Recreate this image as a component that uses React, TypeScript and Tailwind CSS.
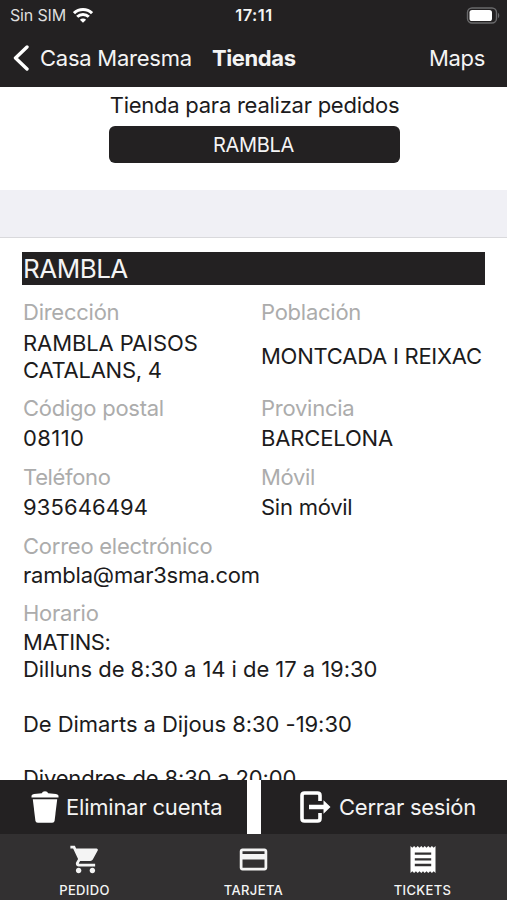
import type { ReactNode } from 'react';
import { MdCreditCard, MdShoppingCart } from 'react-icons/md';

interface FieldProps {
  label: string;
  labelClass?: string;
  className?: string;
  children: ReactNode;
}

const SCHEDULE = [
  { text: 'MATINS:', className: 'tracking-[-0.4px]' },
  { text: 'Dilluns de 8:30 a 14 i de 17 a 19:30', className: 'tracking-[-0.05px]' },
  { text: '', className: '' },
  { text: 'De Dimarts a Dijous 8:30 -19:30', className: 'tracking-[-0.05px]' },
  { text: '', className: '' },
  { text: 'Divendres de 8:30 a 20:00', className: 'tracking-[-0.15px]' },
];

const TABS = [
  { name: 'PEDIDO', icon: <MdShoppingCart className="ml-px size-[33px]" /> },
  { name: 'TARJETA', icon: <MdCreditCard className="mr-px size-[33px]" /> },
  { name: 'TICKETS', icon: <ReceiptIcon /> },
];

function Field({ label, labelClass = 'tracking-[-0.25px]', className = '', children }: FieldProps) {
  return (
    <div className={`flex flex-col whitespace-nowrap ${className}`}>
      <span className={`h-[27px] text-[#acacac] ${labelClass}`}>{label}</span>
      <div className="flex flex-1 flex-col justify-center pt-[3px]">{children}</div>
    </div>
  );
}

function StatusBar() {
  return (
    <div className="grid h-[30px] grid-cols-3 items-center pl-[10px] pr-[7px] text-[16px]">
      <div className="flex items-center gap-[7px] text-[#dedede]">
        <span className="tracking-[-0.15px]">Sin SIM</span>
        <svg width="20" height="15" viewBox="0 0 20 15" fill="none" stroke="white" strokeWidth="3">
          <path d="M1 5.2a12.8 12.8 0 0 1 18 0" />
          <path d="M4.2 8.8a8.3 8.3 0 0 1 11.6 0" />
          <path d="M10 14.8 6.9 11.7a4.4 4.4 0 0 1 6.2 0Z" fill="white" stroke="none" />
        </svg>
      </div>
      <span className="pr-[2px] text-center text-[16.5px] font-semibold tracking-[0.5px]">17:11</span>
      <svg className="justify-self-end" width="34" height="17" viewBox="0 0 34 17">
        <rect x="1.5" y="1" width="29" height="15" rx="4.5" fill="none" stroke="#69696b" strokeWidth="1.4" />
        <rect x="3.5" y="3" width="22.5" height="11" rx="2.6" fill="white" />
        <path d="M32 6v5c1.7-.6 1.7-4.4 0-5Z" fill="#69696b" />
      </svg>
    </div>
  );
}

function NavBar() {
  return (
    <div className="flex h-[57px] items-center pb-px pl-[13px] pr-[22px] text-[22px]">
      <svg width="17" height="26" viewBox="0 0 17 26" fill="none" stroke="white" strokeWidth="3.4" strokeLinecap="round" strokeLinejoin="round">
        <path d="M14 2 2.5 13 14 24" />
      </svg>
      <span className="ml-[10px] w-[172px] whitespace-nowrap tracking-[-0.25px]">Casa Maresma</span>
      <span className="whitespace-nowrap font-bold tracking-[-0.4px]">Tiendas</span>
      <span className="ml-auto tracking-[-0.3px]">Maps</span>
    </div>
  );
}

function TrashIcon() {
  return (
    <svg width="28" height="32" viewBox="0 0 28 32" fill="white">
      <path d="M.5 6.5V4.8Q.5 3.300 3 2.900L10.800 2.300Q11.500.3 14 .3t3.200 2l7.800.6q2.500.4 2.500 1.900V6.500Z" />
      <path d="M1.800 8.300h24.400l-2.600 21.500q-.3 2-2.400 2H6.800q-2.100 0-2.400-2Z" />
    </svg>
  );
}

function LogoutIcon() {
  return (
    <svg width="31" height="32" viewBox="0 0 31 32" fill="none">
      <path d="M20 10V4.500Q20 2 17.500 2H4.500Q2 2 2 4.500v23Q2 30 4.500 30h13q2.500 0 2.500-2.500V22" stroke="white" strokeWidth="3.600" />
      <path d="M9 13.700h14.500V9.300L30.500 16l-7 6.700v-4.400H9Z" fill="white" />
    </svg>
  );
}

function ReceiptIcon() {
  return (
    <svg className="my-[3px]" width="26" height="27" viewBox="0 0 26 27">
      <path
        d="M.5 0 2.300 1.800 4.100 0 5.900 1.800 7.700 0 9.500 1.800 11.300 0 13 1.800 14.700 0 16.500 1.800 18.300 0 20.100 1.800 21.900 0 23.700 1.800 25.500 0V27L23.700 25.200 21.900 27 20.100 25.200 18.300 27 16.500 25.200 14.700 27 13 25.200 11.300 27 9.500 25.200 7.700 27 5.900 25.200 4.100 27 2.300 25.200.5 27Z"
        fill="white"
      />
      <path d="M4.800 7.700h16.400M4.800 13.300h16.400M4.800 19h16.400" stroke="#323031" strokeWidth="2.300" />
    </svg>
  );
}

export default function App() {
  return (
    <div className="flex h-[900px] w-[507px] flex-col overflow-hidden bg-white font-['Inter','Liberation_Sans',sans-serif] text-[22px] leading-[27px] text-[#1c1b1c]">
      <header className="h-[87px] shrink-0 bg-[#232122] text-[#f4f4f4]">
        <StatusBar />
        <NavBar />
      </header>

      <main className="min-h-0 flex-1 overflow-hidden">
        <section className="flex h-[103px] flex-col items-center pt-[5px] pl-[2px]">
          <h2 className="whitespace-nowrap tracking-[-0.25px]">Tienda para realizar pedidos</h2>
          <button className="mt-[7px] h-[37px] w-[291px] rounded-[6px] bg-[#232122] pt-[2px] pr-[2px] text-[20px] tracking-[-0.3px] text-[#f4f4f4]">
            RAMBLA
          </button>
        </section>

        <div className="h-12 border-b border-[#d9d9dc] bg-[#f0f0f5]" />

        <section className="px-[22px] pt-[14px]">
          <h1 className="h-[33px] bg-[#232122] pl-px text-[26px] leading-[33px] tracking-[-0.5px] text-[#f4f4f4]">RAMBLA</h1>
          <div className="mt-[14px] grid grid-cols-[238px_1fr] gap-y-[12px] pl-px">
            <Field label="Dirección">
              <span className="pt-px tracking-[-0.1px]">RAMBLA PAISOS</span>
              <span className="-mb-px tracking-[-0.25px]">CATALANS, 4</span>
            </Field>
            <Field label="Población">
              <span className="tracking-[-0.25px]">MONTCADA I REIXAC</span>
            </Field>
            <Field label="Código postal">
              <span className="tracking-[0.4px]">08110</span>
            </Field>
            <Field label="Provincia">
              <span className="tracking-[-0.15px]">BARCELONA</span>
            </Field>
            <Field label="Teléfono" labelClass="tracking-[-0.35px]">
              <span className="tracking-[0.1px]">935646494</span>
            </Field>
            <Field label="Móvil" labelClass="tracking-[-0.35px]">
              <span className="tracking-[-0.25px]">Sin móvil</span>
            </Field>
            <Field label="Correo electrónico" className="col-span-2">
              <span className="-mt-px tracking-[-0.2px]">rambla@mar3sma.com</span>
            </Field>
            <Field label="Horario" className="col-span-2 -mt-px">
              <div className="-mt-px flex flex-col">
                {SCHEDULE.map((line, index) => (
                  <span key={index} className={`h-[27.2px] ${line.className}`}>
                    {line.text}
                  </span>
                ))}
              </div>
            </Field>
          </div>
        </section>
      </main>

      <div className="flex h-[54px] shrink-0 gap-[14px] text-[#f4f4f4]">
        <button className="flex w-[247px] items-center gap-[8px] bg-[#232122] pl-[31px]">
          <TrashIcon />
          <span className="-ml-px whitespace-nowrap tracking-[-0.2px]">Eliminar cuenta</span>
        </button>
        <button className="flex flex-1 items-center gap-[8px] bg-[#232122] pl-[39px]">
          <LogoutIcon />
          <span className="whitespace-nowrap tracking-[-0.25px]">Cerrar sesión</span>
        </button>
      </div>

      <nav className="grid h-[66px] shrink-0 grid-cols-3 bg-[#323031] text-[#f4f4f4]">
        {TABS.map(({ name, icon }) => (
          <div key={name} className="flex flex-col items-center pt-[9px]">
            {icon}
            <span className="mt-[6px] text-[13px] leading-[16px] font-medium tracking-[0.35px]">{name}</span>
          </div>
        ))}
      </nav>
    </div>
  );
}
